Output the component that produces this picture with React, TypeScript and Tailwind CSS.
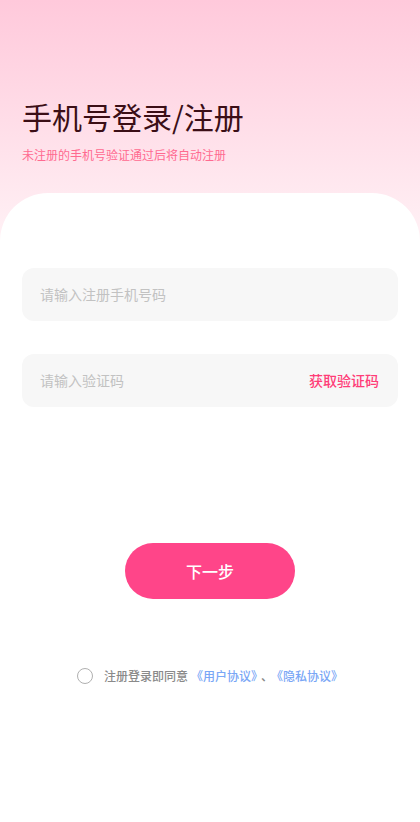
import React from "react";

export default function App() {
  return (
    <div
      className="w-[420px] h-[822px] overflow-hidden bg-white"
      style={{ fontFamily: '"Noto Sans CJK SC", "Noto Sans", sans-serif' }}
    >
      {/* Header */}
      <div className="h-[240px] bg-gradient-to-b from-[#ffc9db] to-[#fff1f5] px-[22px] pt-[96px]">
        <h1 className="text-[30px] leading-[40px] font-normal text-[#3b0e16]">手机号登录/注册</h1>
        <p className="mt-[11px] text-[12px] leading-[16px] text-[#ff6a90]">未注册的手机号验证通过后将自动注册</p>
      </div>

      {/* Card */}
      <div className="-mt-[47px] h-[629px] bg-white rounded-t-[48px] px-[22px] pt-[75px] flex flex-col">
        <div className="h-[53px] rounded-[12px] bg-[#f7f7f7] flex items-center px-[18px]">
          <span className="text-[14px] text-[#c2c2c2]">请输入注册手机号码</span>
        </div>
        <div className="mt-[33px] h-[53px] rounded-[12px] bg-[#f7f7f7] flex items-center justify-between pl-[18px] pr-[19px]">
          <span className="text-[14px] text-[#c2c2c2]">请输入验证码</span>
          <span className="text-[14px] font-medium text-[#ff3d78]">获取验证码</span>
        </div>

        <div className="mt-[136px] flex justify-center">
          <button className="w-[170px] h-[56px] rounded-full bg-[#ff4589] text-white text-[16px] font-medium">
            下一步
          </button>
        </div>

        <div className="mt-[68px] flex items-center justify-center gap-[11px]">
          <span className="w-[16px] h-[16px] rounded-full border-[1.5px] border-[#b0b0b0]" />
          <p className="text-[12px] text-[#8a8a8a] font-medium">
            注册登录即同意
            <span className="ml-[3px] text-[#7aa7f6]">《用户协议》</span>
            <span className="mx-[4px]">、</span>
            <span className="text-[#7aa7f6]">《隐私协议》</span>
          </p>
        </div>
      </div>
    </div>
  );
}
